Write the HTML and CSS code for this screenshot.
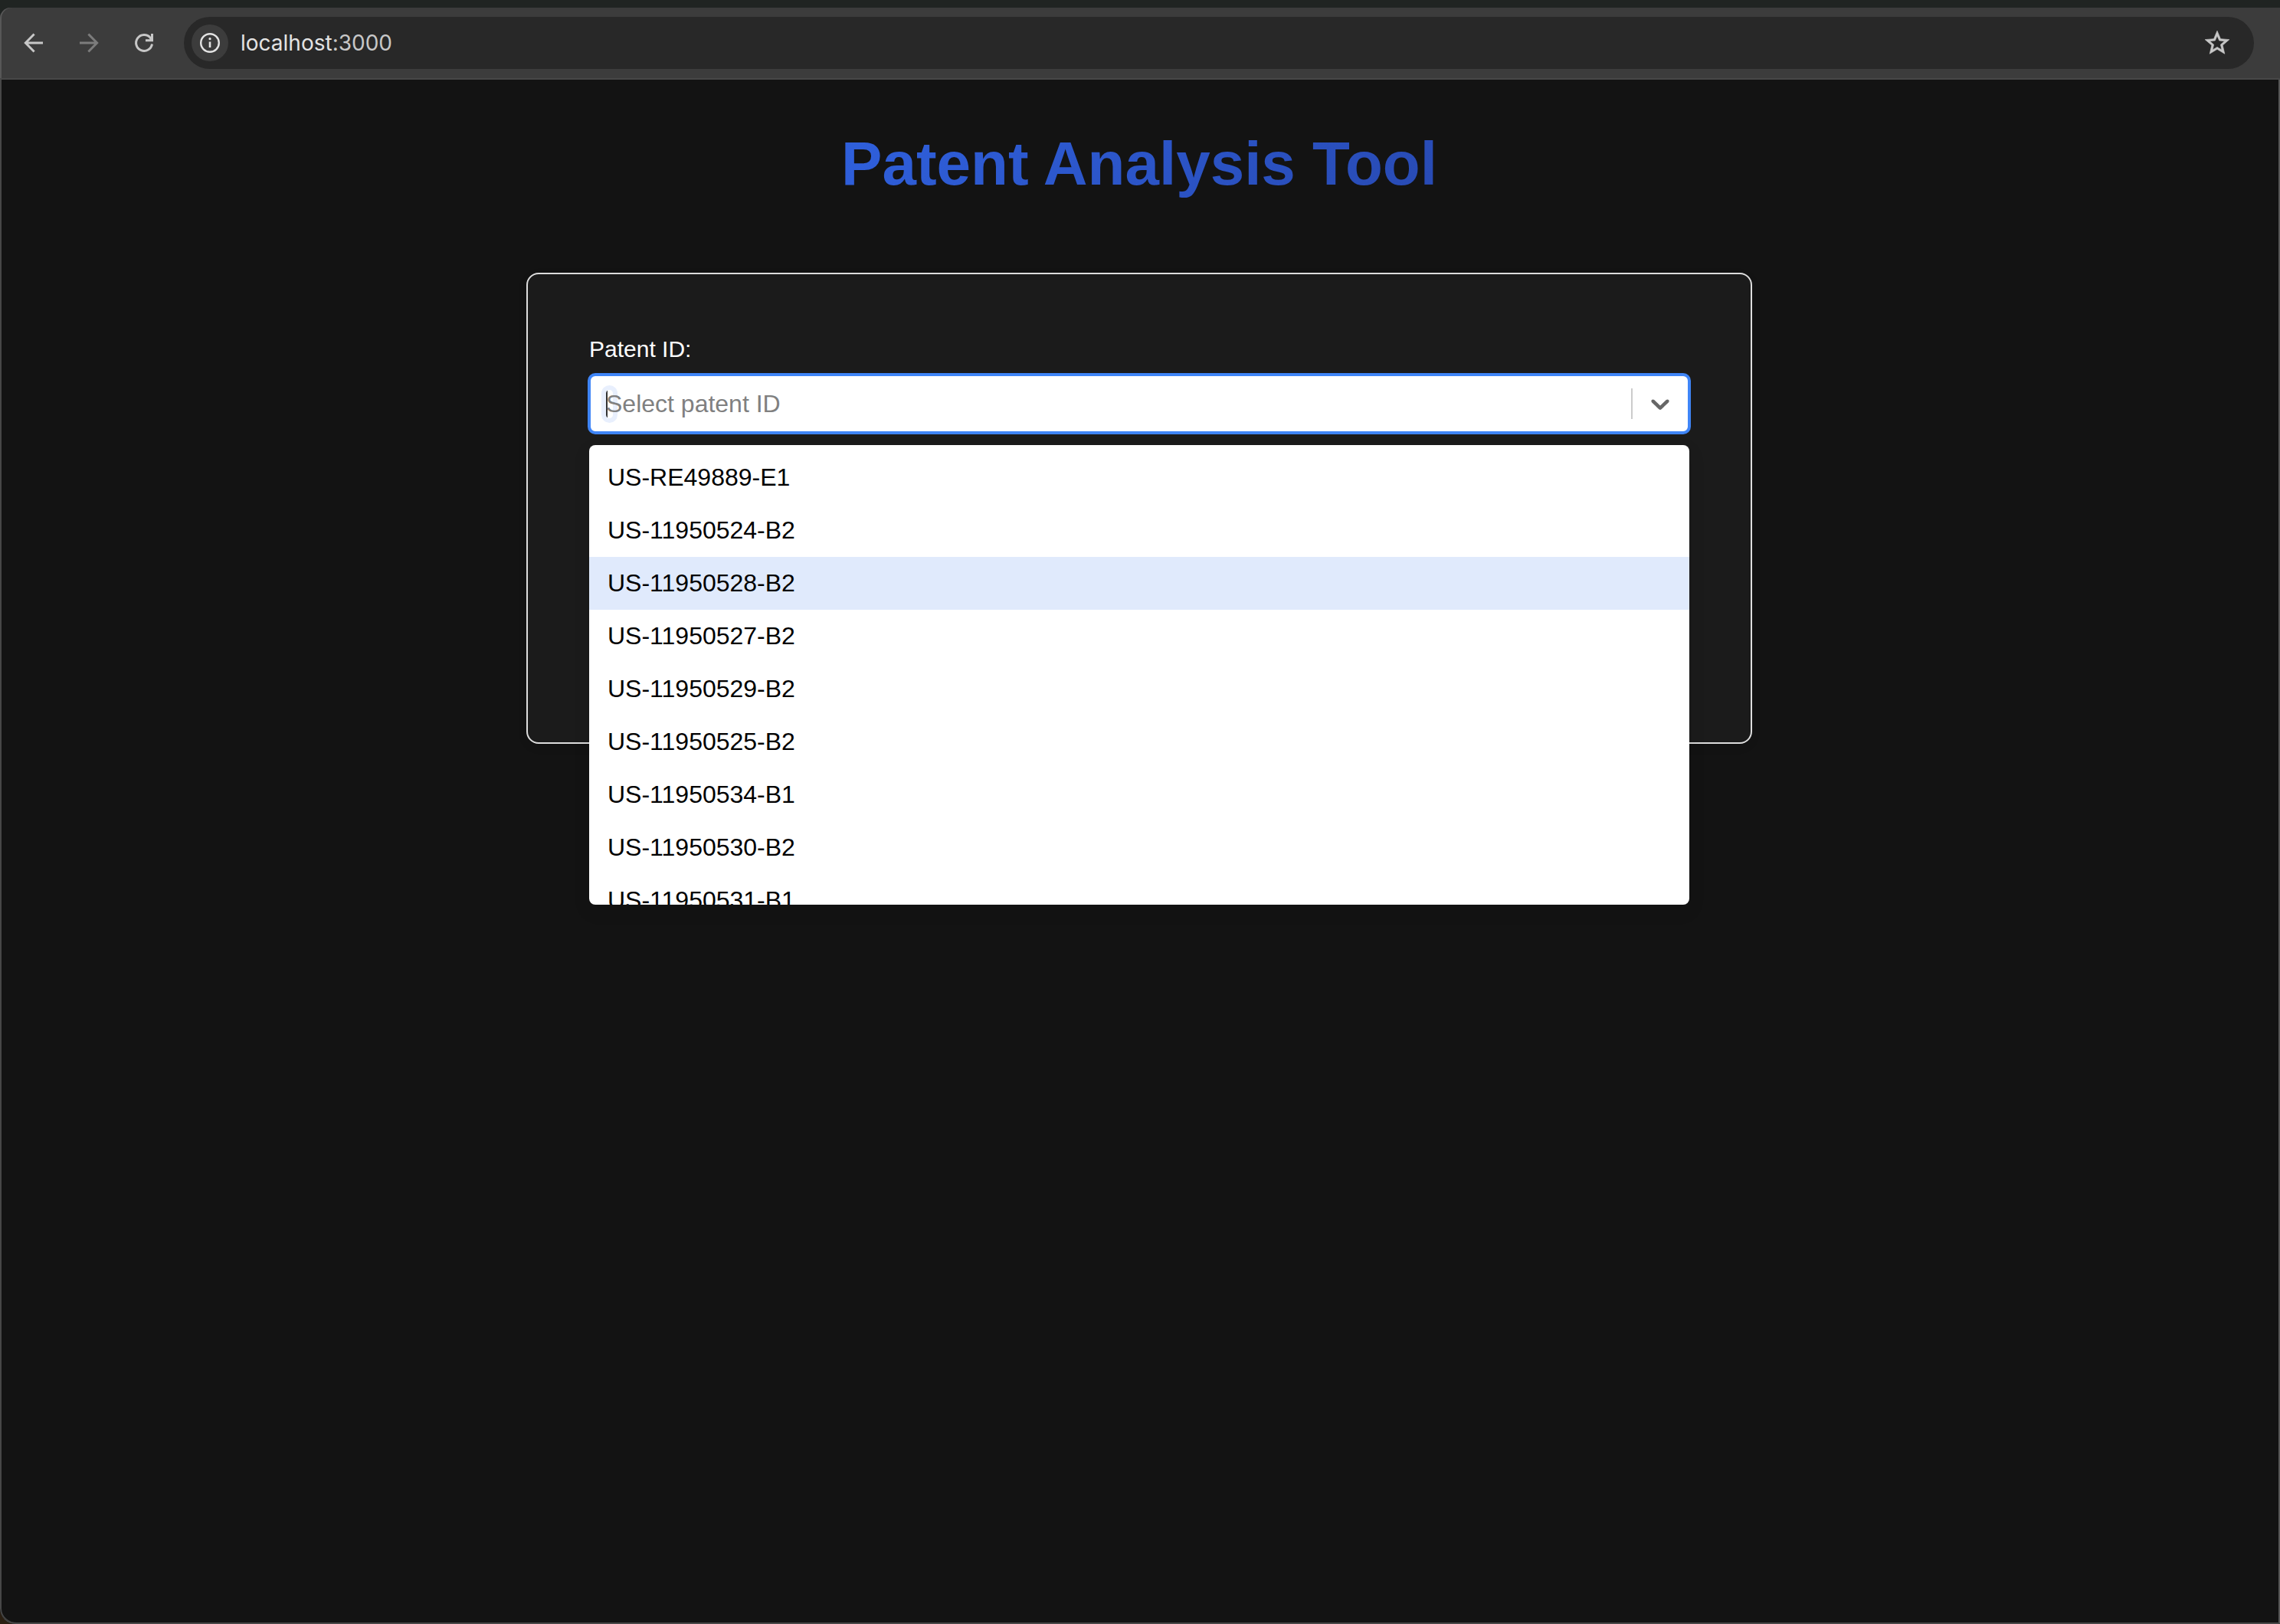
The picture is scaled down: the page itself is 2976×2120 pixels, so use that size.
FILE: index.html
```html
<!DOCTYPE html>
<html lang="en">
<head>
  <meta charset="utf-8">
  <title>Patent Analysis Tool</title>
  <link rel="stylesheet" href="styles.css">
</head>
<body>
  <div class="window">
    <header class="toolbar">
      <nav class="nav">
        <button class="icon-button" type="button" aria-label="Back">
          <svg class="icon" viewBox="0 0 24 24"><path d="M12.4 4.3 4.9 12l7.5 7.7M5.2 12H20" fill="none" stroke="currentColor" stroke-width="2"/></svg>
        </button>
        <button class="icon-button" type="button" aria-label="Forward" disabled>
          <svg class="icon" viewBox="0 0 24 24"><path d="M11.6 4.3 19.1 12l-7.5 7.7M18.8 12H4" fill="none" stroke="currentColor" stroke-width="2"/></svg>
        </button>
        <button class="icon-button" type="button" aria-label="Reload">
          <svg class="icon" viewBox="0 0 24 24"><path d="M19 13a7 7 0 1 1-1.6-5.6L18.8 9.7M13.3 9.9H19V4" fill="none" stroke="currentColor" stroke-width="2"/></svg>
        </button>
      </nav>
      <div class="address">
        <button class="site-info" type="button" aria-label="Site information">
          <svg class="info-icon" viewBox="0 0 28 28"><circle cx="14" cy="14" r="11.8" fill="none" stroke="currentColor" stroke-width="2.4"/><path d="M14 12.5V20" stroke="currentColor" stroke-width="2.6"/><circle cx="14" cy="8.7" r="1.6" fill="currentColor"/></svg>
        </button>
        <a class="url" href="#"><span class="host">localhost</span>:3000</a>
        <button class="icon-button" type="button" aria-label="Bookmark this tab">
          <svg class="star" viewBox="0 0 24 24"><path d="m22 9.24-7.19-.62L12 2 9.19 8.63 2 9.24l5.46 4.73L5.82 21 12 17.27 18.18 21l-1.63-7.03zM12 15.4l-3.76 2.27 1-4.28-3.32-2.88 4.38-.38L12 6.1l1.71 4.04 4.38.38-3.32 2.88 1 4.28z" fill="currentColor" stroke="currentColor" stroke-width=".4"/></svg>
        </button>
      </div>
    </header>
    <main class="page">
      <h1 class="title">Patent Analysis Tool</h1>
      <form class="card">
        <label class="label" for="patent">Patent ID:</label>
        <div class="select">
          <div class="control">
            <span class="focus-ring"></span>
            <input class="input" id="patent" type="text" role="combobox" aria-expanded="true" aria-controls="patents" placeholder="Select patent ID">
            <span class="divider"></span>
            <button class="toggle" type="button" aria-label="Toggle list">
              <svg class="chevron" viewBox="0 0 20 20"><path d="M4.516 7.548c0.436-0.446 1.043-0.481 1.576 0l3.908 3.747 3.908-3.747c0.533-0.481 1.141-0.446 1.574 0 0.436 0.445 0.408 1.197 0 1.615-0.406 0.418-4.695 4.502-4.695 4.502-0.217 0.223-0.502 0.335-0.787 0.335s-0.57-0.112-0.789-0.335c0 0-4.287-4.084-4.695-4.502s-0.436-1.17 0-1.615z" fill="currentColor"/></svg>
            </button>
          </div>
          <ul class="menu" id="patents" role="listbox">
            <li class="option" role="option">US-RE49889-E1</li>
            <li class="option" role="option">US-11950524-B2</li>
            <li class="option option-focused" role="option">US-11950528-B2</li>
            <li class="option" role="option">US-11950527-B2</li>
            <li class="option" role="option">US-11950529-B2</li>
            <li class="option" role="option">US-11950525-B2</li>
            <li class="option" role="option">US-11950534-B1</li>
            <li class="option" role="option">US-11950530-B2</li>
            <li class="option" role="option">US-11950531-B1</li>
          </ul>
        </div>
      </form>
    </main>
  </div>
</body>
</html>
```
FILE: styles.css
```css
* {
  box-sizing: border-box;
}

body {
  margin: 0;
  background: #2b1f12;
  font-family: "Liberation Sans", Arial, sans-serif;
}

button {
  padding: 0;
  border: 0;
  background: none;
  color: inherit;
  font: inherit;
}

.window {
  display: flex;
  flex-direction: column;
  min-height: 100vh;
  overflow: hidden;
  background: #202422;
  border-bottom-left-radius: 20px;
}

/* Browser toolbar */
.toolbar {
  display: flex;
  align-items: center;
  gap: 34px;
  margin-top: 10px;
  padding: 12px 34px 12px 26px;
  background: #3c3c3c;
  border-bottom: 2px solid #474747;
  border-top-left-radius: 14px;
  box-shadow: inset 2px 0 #575757;
  color: #c7c7c7;
}

.nav {
  display: flex;
  gap: 36px;
}

.icon-button {
  display: flex;
  color: #c7c7c7;
}

.icon-button:disabled {
  color: #7c7c7c;
}

.icon {
  width: 36px;
  height: 36px;
}

.address {
  display: flex;
  flex: 1;
  align-items: center;
  gap: 16px;
  height: 68px;
  padding: 0 29px 0 10px;
  border-radius: 34px;
  background: #282828;
}

.site-info {
  display: flex;
  align-items: center;
  justify-content: center;
  width: 48px;
  height: 48px;
  border-radius: 50%;
  background: #3c3c3c;
  color: #e3e3e3;
}

.info-icon {
  width: 28px;
  height: 28px;
}

.url {
  flex: 1;
  color: #c7c7c7;
  font-family: Inter, "Liberation Sans", sans-serif;
  font-size: 28px;
  line-height: 36px;
  text-decoration: none;
}

.host {
  color: #e3e3e3;
}

.star {
  width: 38px;
  height: 38px;
}

/* Page */
.page {
  flex: 1;
  padding: 64px 0;
  border-right: 2px solid #575757;
  border-bottom: 2px solid #474747;
  border-bottom-left-radius: 20px;
  background: #131313;
  box-shadow: inset 2px 0 #474747;
}

.title {
  width: fit-content;
  margin: 0 auto 96px;
  background: linear-gradient(135deg, #2f60dd, #284ab3);
  background-clip: text;
  color: transparent;
  font-size: 80px;
  line-height: 92px;
}

.card {
  max-width: 1600px;
  min-height: 615px;
  margin: 0 auto;
  padding: 80px;
  border: 2px solid #dddddd;
  border-radius: 16px;
  background: #1b1b1b;
  box-shadow: 0 4px 12px rgba(0, 0, 0, 0.1);
}

.label {
  display: block;
  margin-bottom: 16px;
  color: #ffffff;
  font-size: 30px;
  line-height: 35px;
}

.select {
  position: relative;
}

.control {
  position: relative;
  display: flex;
  align-items: center;
  height: 76px;
  border: 2px solid #3f85f7;
  border-radius: 8px;
  background: #ffffff;
  box-shadow: 0 0 0 2px #3f85f7;
}

.input {
  position: relative;
  flex: 1;
  min-width: 0;
  padding: 0 20px;
  border: 0;
  outline: 0;
  background: transparent;
  color: #000000;
  font: inherit;
  font-size: 32px;
  line-height: 36px;
}

.input::placeholder {
  color: #808080;
  opacity: 1;
}

/* Glow and caret drawn at the start of the text box */
.focus-ring {
  position: absolute;
  top: 18px;
  left: 20px;
  width: 9px;
  height: 37px;
  border-left: 2px solid #333333;
  background: #ffffff;
}

.focus-ring::before {
  content: "";
  position: absolute;
  inset: -6px -6px -6px -8px;
  border: 6px solid #e8effd;
  border-radius: 11px;
}

.divider {
  width: 2px;
  height: 40px;
  background: #cccccc;
}

.toggle {
  display: flex;
  padding: 0 16px;
  color: #666666;
}

.chevron {
  width: 40px;
  height: 40px;
}

.menu {
  position: absolute;
  top: 100%;
  left: 0;
  right: 0;
  max-height: 600px;
  margin: 16px 0 0;
  padding: 8px 0;
  overflow-y: auto;
  scrollbar-width: none;
  border-radius: 8px;
  background: #ffffff;
  box-shadow: 0 8px 22px rgba(0, 0, 0, 0.1);
  list-style: none;
}

.option {
  padding: 16px 24px;
  color: #000000;
  font-size: 32px;
  line-height: 37px;
}

.option-focused {
  background: #e0eafc;
}
```
